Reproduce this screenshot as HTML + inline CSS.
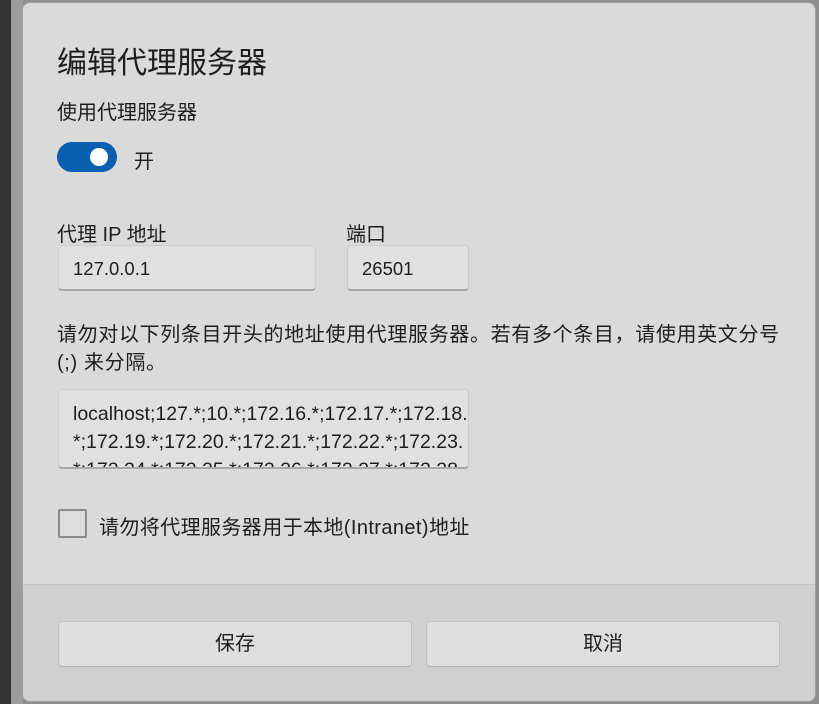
<!DOCTYPE html>
<html><head><meta charset="utf-8"><style>
*{margin:0;padding:0;box-sizing:border-box}
body{width:819px;height:704px;overflow:hidden;background:#8e8e8e;font-family:"Liberation Sans","Noto Sans CJK SC",sans-serif;color:#1e1e1e;position:relative}
.dark{position:absolute;left:0;top:0;width:11px;height:704px;background:#333}
.side{position:absolute;left:11px;top:0;width:12px;height:704px;background:#9c9c9c}
.dlg{position:absolute;left:22px;top:2px;width:794px;height:700px;background:#dadada;border-radius:8px;overflow:hidden;border:1px solid #a0a0a0}
.foot{position:absolute;left:0;top:581px;width:100%;height:120px;background:#d0d0d0;border-top:1px solid #c4c4c4}
.t{position:absolute;white-space:nowrap}
.inp{position:absolute;background:#e0e0e0;border:1px solid #cdcdcd;border-bottom:2px solid #a8a8a8;border-radius:4px;font-size:18.5px;padding-left:14px;line-height:46px}
.btn{position:absolute;top:621px;height:46px;background:#dedede;border:1px solid #c2c2c2;border-bottom-color:#b0b0b0;border-radius:4px;font-size:20px;text-align:center;line-height:44px}
</style></head><body>
<div class="dark"></div><div class="side"></div>
<div class="dlg">
<div class="foot"></div>
</div>
<div class="t" style="left:57px;top:38px;font-size:30px">编辑代理服务器</div>
<div class="t" style="left:57px;top:96px;font-size:20px">使用代理服务器</div>
<div style="position:absolute;left:57px;top:142px;width:60px;height:30px;border-radius:15px;background:#0a5fb0"></div>
<div style="position:absolute;left:90px;top:148px;width:18px;height:18px;border-radius:9px;background:#fff"></div>
<div class="t" style="left:134px;top:145px;font-size:20px">开</div>
<div class="t" style="left:57px;top:218px;font-size:20px">代理 IP 地址</div>
<div class="t" style="left:346px;top:218px;font-size:20px">端口</div>
<div class="inp" style="left:58px;top:245px;width:258px;height:46px">127.0.0.1</div>
<div class="inp" style="left:347px;top:245px;width:122px;height:46px">26501</div>
<div class="t" style="left:57px;top:321px;font-size:20px;line-height:28px;letter-spacing:0.65px">请勿对以下列条目开头的地址使用代理服务器。若有多个条目，请使用英文分号<br>(;) 来分隔。</div>
<div class="inp" style="left:58px;top:389px;width:411px;height:80px;line-height:28px;padding-top:10px;overflow:hidden;white-space:nowrap;font-size:19.5px">localhost;127.*;10.*;172.16.*;172.17.*;172.18.<br>*;172.19.*;172.20.*;172.21.*;172.22.*;172.23.<br>*;172.24.*;172.25.*;172.26.*;172.27.*;172.28.</div>
<div style="position:absolute;left:58px;top:509px;width:29px;height:29px;border:2px solid #8a8a8a;border-radius:2px;background:#dcdcdc"></div>
<div class="t" style="left:99px;top:511px;font-size:20px;letter-spacing:0.4px">请勿将代理服务器用于本地(Intranet)地址</div>
<div class="btn" style="left:58px;width:354px">保存</div>
<div class="btn" style="left:426px;width:354px">取消</div>
</body></html>
